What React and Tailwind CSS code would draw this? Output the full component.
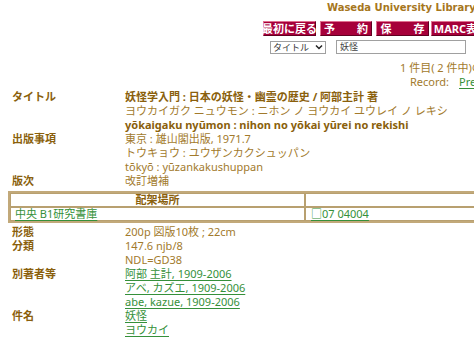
export default function App() {
  const font = { fontFamily: '"Noto Sans", "Noto Sans CJK JP", sans-serif' };
  const Btn = ({ children, w }) => (
    <div
      className={`h-[15px] flex items-center justify-center bg-[#a6003a] text-white font-bold text-[11px] leading-none border-t border-l border-[#e07090] border-b border-r border-b-[#600020] border-r-[#600020] whitespace-nowrap shrink-0 ${w}`}
    >
      {children}
    </div>
  );
  const L = ({ children, className = '' }) => (
    <div className={`h-[14px] leading-[14px] whitespace-nowrap ${className}`}>{children}</div>
  );
  const Row = ({ label, children }) => (
    <div className="flex">
      <div className="w-[125px] pl-[12px] font-bold text-[#8a5f0c] shrink-0 h-[14px] leading-[14px]">{label}</div>
      <div className="flex flex-col">{children}</div>
    </div>
  );
  const Link = ({ children }) => (
    <span className="text-[#35903a] underline underline-offset-2 whitespace-nowrap">{children}</span>
  );
  return (
    <div className="w-[474px] h-[337px] overflow-hidden bg-white text-[11px] leading-[14px] text-[#a27a2c]" style={font}>
      <div className="pl-[327px] pt-[1px] h-[21px] font-bold leading-[14px] text-[#a6761c] whitespace-nowrap" style={{ fontFamily: '"DejaVu Sans", sans-serif', fontSize: '10px' }}>
        Waseda University Library
      </div>
      <div className="flex pl-[263px] w-[700px]">
        <Btn w="w-[53px]">最初に戻る</Btn>
        <Btn w="w-[52px] ml-[4px]">予　　約</Btn>
        <Btn w="w-[53px] ml-[4px]">保　　存</Btn>
        <Btn w="w-[60px] ml-[2px]">MARC表示</Btn>
      </div>
      <div className="flex items-center pl-[270px] mt-[4px] gap-[10px] w-[700px]">
        <div className="w-[56px] h-[13px] border border-[#a0a0a0] text-[9px] leading-[11px] text-[#333] flex items-center justify-between px-[2px] shrink-0">
          <span>タイトル</span>
          <svg width="8" height="6" viewBox="0 0 8 6"><path d="M1 1.5 L4 4.5 L7 1.5" stroke="#222" strokeWidth="1.5" fill="none" /></svg>
        </div>
        <div className="w-[130px] h-[14px] border border-[#a0a0a0] text-[9px] leading-[12px] text-[#444] pl-[3px] shrink-0">妖怪</div>
      </div>
      <div className="pl-[400px] mt-[7px] h-[14px] whitespace-nowrap w-[700px]">1 件目( 2 件中)の</div>
      <div className="pl-[410px] h-[14px] whitespace-nowrap w-[700px] flex">
        <span>Record:</span>
        <span className="ml-[10px]"><Link>Previous</Link></span>
      </div>
      <div className="mt-[1px] flex flex-col">
        <Row label="タイトル">
          <L className="font-bold text-[#8a5f0c]">妖怪学入門 : 日本の妖怪・幽霊の歴史 / 阿部主計 著</L>
          <L>ヨウカイガク ニュウモン : ニホン ノ ヨウカイ ユウレイ ノ レキシ</L>
        </Row>
        <L className="pl-[125px] font-bold text-[#8a5f0c]">yōkaigaku nyūmon : nihon no yōkai yūrei no rekishi</L>
        <Row label="出版事項">
          <L>東京 : 雄山閣出版, 1971.7</L>
          <L>トウキョウ : ユウザンカクシュッパン</L>
          <L>tōkyō : yūzankakushuppan</L>
        </Row>
        <Row label="版次">
          <L>改訂増補</L>
        </Row>
        <div className="ml-[8px] mt-[3px] w-[600px] h-[32px] border-2 border-[#c2a97a] flex flex-col">
          <div className="flex h-[14px]">
            <div className="w-[295px] border border-[#b8a070] font-bold text-[#8a5f0c] text-center leading-[12px]">配架場所</div>
            <div className="flex-1 border border-[#b8a070]"></div>
          </div>
          <div className="flex h-[14px]">
            <div className="w-[295px] border border-[#b8a070] pl-[4px] leading-[12px]"><Link>中央 B1研究書庫</Link></div>
            <div className="flex-1 border border-[#b8a070] pl-[5px] leading-[12px]"><Link>□07 04004</Link></div>
          </div>
        </div>
        <div className="h-[2px]"></div>
        <Row label="形態">
          <L>200p 図版10枚 ; 22cm</L>
        </Row>
        <Row label="分類">
          <L>147.6 njb/8</L>
          <L>NDL=GD38</L>
        </Row>
        <Row label="別著者等">
          <L><Link>阿部 主計, 1909-2006</Link></L>
          <L><Link>アベ, カズエ, 1909-2006</Link></L>
          <L><Link>abe, kazue, 1909-2006</Link></L>
        </Row>
        <Row label="件名">
          <L><Link>妖怪</Link></L>
          <L><Link>ヨウカイ</Link></L>
        </Row>
      </div>
    </div>
  );
}
